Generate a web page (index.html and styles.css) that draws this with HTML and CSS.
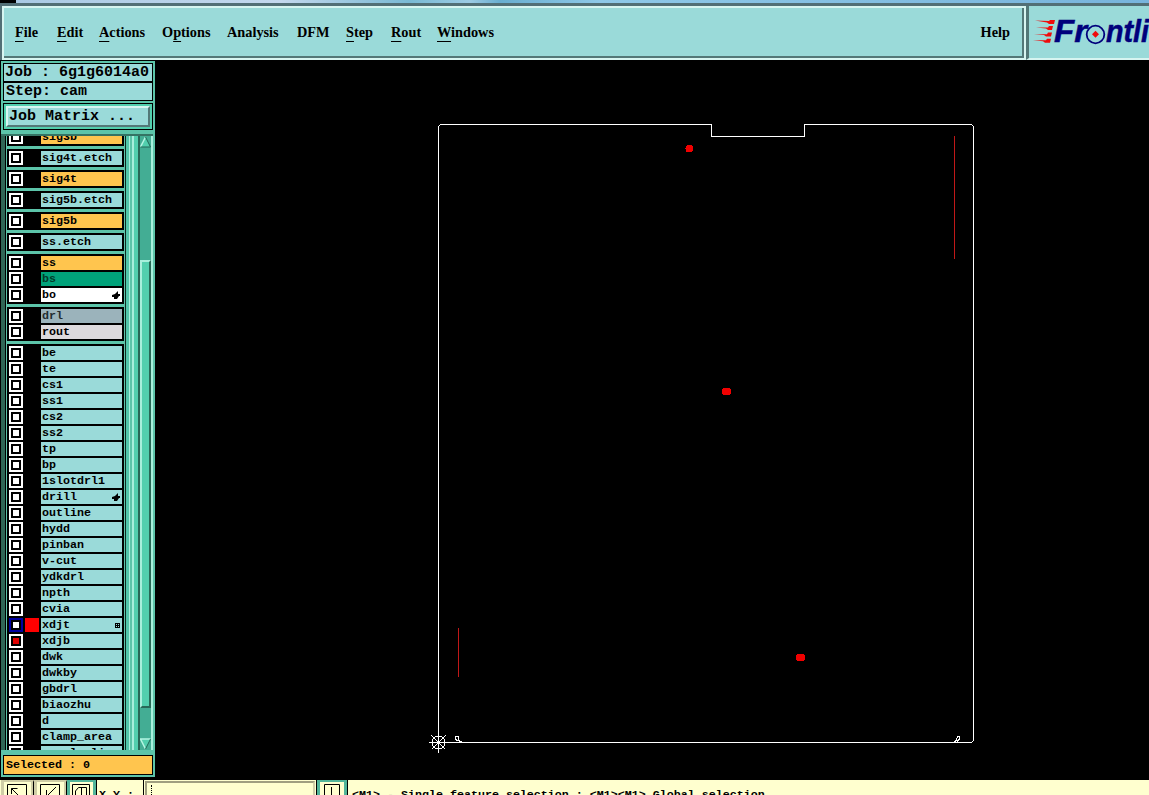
FILE: index.html
```html
<!DOCTYPE html>
<html lang="en">
<head>
    <meta charset="UTF-8">
    <title>6g1g6014a0 - cam</title>
    <link rel="stylesheet" href="styles.css">
</head>
<body>
    <div class="desktop-strip"></div>
    <header>
        <nav class="menubar">
            <a class="file"><u>F</u>ile</a>
            <a class="edit"><u>E</u>dit</a>
            <a class="actions"><u>A</u>ctions</a>
            <a class="options">O<u>p</u>tions</a>
            <a class="analysis">Analysis</a>
            <a class="dfm">DFM</a>
            <a class="step"><u>S</u>tep</a>
            <a class="rout"><u>R</u>out</a>
            <a class="windows"><u>W</u>indows</a>
            <a class="help">Help</a>
        </nav>
        <div class="brand">
            <svg width="120" height="46" viewBox="1029 11 120 46">
                <g fill="#f00b0b">
                    <path d="M1035 20.500l14 .5 1-1h5l-1 4h-5l-2-1.500zM1036 27.500l12 0 1-1.500h4l-1 4h-4l-2-1.500zM1034 34l13 .2 1-1.700h4l-1 4h-5l-2-1.500zM1033 40.200l13 0 1-1.500h4l-1 4h-5l-2-1.500z"/>
                </g>
                <g class="logo-text">
                    <text x="1054" y="41.500" textLength="33" lengthAdjust="spacingAndGlyphs">Fr</text>
                    <text x="1106" y="41.500" textLength="43" lengthAdjust="spacingAndGlyphs">ntli</text>
                </g>
                <circle cx="1095.500" cy="34.500" r="8.800" fill="none" stroke="#00007c" stroke-width="1.800"/>
                <path d="M1095.500 30.800l3.500 3.500-3.500 3.500-3.500-3.500z" fill="#f00b0b"/>
            </svg>
        </div>
    </header>
    <main>
        <aside>
            <div class="job">Job : 6g1g6014a0</div>
            <div class="job stepname">Step: cam</div>
            <div class="matrix"><button>Job Matrix ...</button></div>
            <div class="layers">
                <div class="list" id="list"></div>
                <div class="scrollbar">
                    <svg width="11" height="12" viewBox="0 0 11 12"><path d="M5.500 1L.5 11h10z" fill="#52cfae"/><path d="M5.500 1L.5 11" stroke="#b4f5e2" stroke-width="1.500"/><path d="M5.500 1l5 10H.5" fill="none" stroke="#226656"/></svg>
                    <div class="thumb"></div>
                    <svg width="11" height="12" viewBox="0 0 11 12"><path d="M5.500 11L.5 1h10z" fill="#52cfae"/><path d="M5.500 11L.5 1h10" fill="none" stroke="#b4f5e2" stroke-width="1.500"/><path d="M10.500 1l-5 10" stroke="#226656"/></svg>
                </div>
            </div>
            <div class="selected">Selected : 0</div>
        </aside>
        <section class="canvas">
            <svg width="994" height="719" viewBox="155 61 994 719" shape-rendering="crispEdges">
                <g fill="none" stroke="#fff">
                    <path d="M438.500 742.500V126.500l2-2H711.500V136.500H804.500V124.500H971.500l2 2V740.500l-2 2H438.500"/>
                    <path d="M457.500 741V740.500l-2-1V736.500h3v3l1 2h2"/>
                    <path d="M953.500 741.500h2l1-2 1-3h2v3l-2 1V742"/>
                    <path d="M429 742.500H448M438.500 733V753M431.500 735.500l14 14M445.500 735.500l-14 14"/>
                    <circle cx="438.500" cy="742.500" r="6.500"/>
                </g>
                <rect x="437" y="741" width="3" height="3" fill="#fff"/>
                <path d="M954.500 136V259M458.500 628V677" stroke="#c01818"/>
                <g fill="#f00000">
                    <circle cx="689.500" cy="148.500" r="4"/>
                    <rect x="722" y="388" width="9" height="7" rx="3"/>
                    <rect x="796" y="654" width="9" height="7" rx="3"/>
                </g>
            </svg>
        </section>
    </main>
    <footer>
        <div class="tool"><svg width="20" height="12"><path d="M.5 12V.5h19V12M4.500 10V4.500h6M4.500 4.500l8 8" fill="none" stroke="#000"/></svg></div>
        <div class="tool"><svg width="20" height="12"><path d="M.5 12V.5h19V12M16 3l-9 9M6.500 6v6" fill="none" stroke="#000"/></svg></div>
        <div class="tool active"><svg width="18" height="12"><path d="M.5 12V.5h17V12M3.500 12V7l3-3.500h8V12M9.500 3v9" fill="none" stroke="#000"/></svg></div>
        <div class="xy">X Y :</div>
        <div class="coords"><i></i></div>
        <div class="tool active alert"><svg width="16" height="12"><path d="M.5 12V.5h15V12M7.500 3v9" fill="none" stroke="#000"/></svg></div>
        <div class="hint">&lt;M1&gt; - Single feature selection ; &lt;M1&gt;&lt;M1&gt; Global selection</div>
    </footer>
    <script src="layers.js"></script>
</body>
</html>
```
FILE: styles.css
```css
* {
    box-sizing: border-box;
}
body {
    margin: 0;
    width: 1149px;
    height: 795px;
    overflow: hidden;
    background: #000;
    color: #000;
    font: bold 11.67px/14px "Liberation Mono", monospace;
}
.desktop-strip {
    height: 3px;
    background: linear-gradient(90deg, #000 16px, #a9c9e4 16px, #c4d8ee 280px, #79b9d4 410px, #9ccbe4 470px, #69aed0 500px, #8ec8e8 600px, #78b4dc);
}
header {
    height: 57px;
    display: flex;
    border-top: 3px solid #526f76;
    border-left: 2px solid #526f76;
    background: #9adad9;
}
.menubar {
    width: 1024px;
    border: 2px solid #d7f5f1;
    box-shadow: inset -2px -2px #537878;
    display: flex;
    padding: 15px 0 0 11px;
    font: bold 14.3px/18px "Liberation Serif", serif;
}
.menubar a {
    white-space: nowrap;
}
.menubar u {
    text-underline-offset: 4px;
    text-decoration-thickness: 1px;
    text-decoration-skip-ink: none;
}
.file { width: 42px; }
.edit { width: 42px; }
.actions { width: 63px; }
.options { width: 65px; }
.analysis { width: 70px; }
.dfm { width: 49px; }
.step { width: 45px; }
.rout { width: 46px; }
.help {
    margin-left: auto;
    margin-right: 14px;
}
.brand {
    flex: 1;
    overflow: hidden;
    border-left: 3px solid #537878;
    border-bottom: 2px solid #d7f5f1;
    padding-top: 5px;
}
.brand svg {
    display: block;
}
.logo-text {
    font: italic bold 31px "Liberation Sans", sans-serif;
    fill: #00007c;
    stroke: #00007c;
    stroke-width: .5px;
}
main {
    height: 719px;
    margin-top: 1px;
    display: flex;
}
aside {
    width: 154px;
    height: 716px;
    margin-left: 1px;
    background: #5cc4a9;
    display: flex;
    flex-direction: column;
    padding: 2px 2px 0 2px;
}
.job {
    height: 19px;
    border: 1px solid #000;
    background: #9adad9;
    padding-left: 1px;
    font-size: 15px;
    line-height: 18px;
    white-space: nowrap;
}
.stepname {
    padding-left: 2px;
}
.matrix {
    margin-top: 2px;
    height: 27px;
    border: 1px solid #000;
    background: #52cfae;
    padding: 2px;
}
.matrix button {
    display: block;
    width: 144px;
    height: 21px;
    border: 2px solid;
    border-color: #d7f5f1 #537878 #537878 #d7f5f1;
    background: #9adad9;
    padding: 0 0 0 1px;
    text-align: left;
    font: bold 15px/16px "Liberation Mono", monospace;
    color: #000;
}
.layers {
    height: 616px;
    margin: 4px 0 0 -2px;
    display: flex;
    border-top: 2px solid #357364;
}
.list {
    width: 137px;
    height: 614px;
    overflow: hidden;
    border-left: 4px solid #306656;
    padding-left: 2px;
    background: linear-gradient(90deg, #000 1px, #5cc4a9 1px, #5cc4a9 120px, #0c2a22 120px, #0c2a22 121px, #52c5a9 121px, #52c5a9 124px, #a8efdc 124px, #a8efdc 125px, #5cc4a9 125px, #5cc4a9 127px, #a8efdc 127px, #a8efdc 129px, #52cfae 129px);
}
.group {
    width: 117px;
    margin-bottom: 3px;
    padding: 2px;
    background: #000;
    display: flex;
    flex-direction: column;
    gap: 2px;
}
.group:first-child {
    margin-top: -8px;
}
.row {
    height: 14px;
    display: flex;
    gap: 2px;
}
.check {
    width: 14px;
    height: 14px;
    border: 2px solid #fff;
    padding: 2px;
    background: linear-gradient(#fff, #fff) content-box, #000;
}
.check.work {
    border-color: #0000a0;
}
.check.on {
    background: linear-gradient(#e00000, #e00000) content-box, #000;
}
.color {
    width: 14px;
}
.color.red {
    background: #f00;
}
.name {
    width: 81px;
    padding: 0 2px 0 1px;
    display: flex;
    justify-content: space-between;
    align-items: center;
    background: #9adad9;
    line-height: 14px;
}
.signal { background: #ffc54e; }
.mask { background: #00a27a; color: #033a2a; }
.white { background: #fff; }
.drill { background: #9bb3bb; color: #222c30; }
.routing { background: #dddadd; }
.scrollbar {
    width: 15px;
    border-left: 2px solid #286857;
    border-right: 2px solid #a8efdc;
    background: #43ad94;
    display: flex;
    flex-direction: column;
}
.scrollbar svg {
    flex: none;
}
.thumb {
    flex: none;
    height: 448px;
    margin: 112px 0 30px;
    border: 2px solid;
    border-color: #a8efdc #286857 #286857 #a8efdc;
    background: #52cfae;
}
.selected {
    margin-top: 5px;
    height: 20px;
    border: 1px solid #000;
    background: #ffc54e;
    padding-left: 2px;
    line-height: 18px;
}
footer {
    height: 15px;
    overflow: hidden;
    display: flex;
    background: #ffffcf;
    padding-left: 1px;
}
.tool {
    width: 33px;
    height: 32px;
    border: 3px solid #cfcda6;
    border-top-width: 2px;
    border-right: 1px solid #000;
    box-shadow: inset -2px 0 #cfcda6;
    padding: 2px 3px;
    flex: none;
}
.tool svg {
    display: block;
}
.tool.active {
    width: 29px;
    border: 3px solid #52b59a;
    border-top-width: 2px;
    box-shadow: 1px 0 #000;
    padding: 2px;
}
.xy {
    width: 48px;
    padding: 8px 0 0 3px;
    white-space: nowrap;
    border-right: 1px solid #000;
}
.coords {
    width: 170px;
    height: 32px;
    margin: 1px 2px 0 1px;
    border: 2px solid #a09f80;
    border-right-color: #d2d0aa;
    padding: 2px 4px;
}
.coords i {
    display: block;
    height: 20px;
    border-left: 1px dotted #000;
}
.tool.alert {
    width: 30px;
    padding-left: 4px;
    box-shadow: 1px 0 #000, -1px 0 #000;
}
.hint {
    padding: 8px 0 0 5px;
    white-space: pre;
}
```
FILE: layers.js
```js
// [name, background class, icon]
const groups = [
    [['sig3b', 'signal']],
    [['sig4t.etch']],
    [['sig4t', 'signal']],
    [['sig5b.etch']],
    [['sig5b', 'signal']],
    [['ss.etch']],
    [['ss', 'signal'], ['bs', 'mask'], ['bo', 'white', 'hand']],
    [['drl', 'drill'], ['rout', 'routing']],
    [['be'], ['te'], ['cs1'], ['ss1'], ['cs2'], ['ss2'], ['tp'], ['bp'], ['1slotdrl1'],
     ['drill', '', 'hand'], ['outline'], ['hydd'], ['pinban'], ['v-cut'], ['ydkdrl'],
     ['npth'], ['cvia'], ['xdjt', '', 'grid'], ['xdjb'], ['dwk'], ['dwkby'], ['gbdrl'],
     ['biaozhu'], ['d'], ['clamp_area'], ['panelouli']]
];

const icons = {
    hand: '<svg width="8" height="8"><path d="M0 4l3-1 2-2 1-1v3h2v2H7L5 8H2V6H0z"/></svg>',
    grid: '<svg width="5" height="5" shape-rendering="crispEdges"><path d="M.5.500h4v4h-4zM2.500 0v5M0 2.500h5" fill="none" stroke="#000"/></svg>'
};

document.getElementById('list').innerHTML = groups.map(rows =>
    '<div class="group">' + rows.map(([name, cls, icon]) => {
        const check = name === 'xdjt' ? ' work' : name === 'xdjb' ? ' on' : '';
        const color = name === 'xdjt' ? ' red' : '';
        return `<div class="row"><span class="check${check}"></span><span class="color${color}"></span>` +
            `<span class="name ${cls || ''}">${name}${icons[icon] || ''}</span></div>`;
    }).join('') + '</div>'
).join('');
```
